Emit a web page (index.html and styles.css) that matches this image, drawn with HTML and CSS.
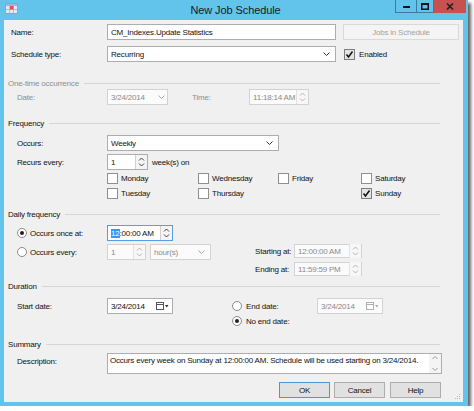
FILE: index.html
```html
<!DOCTYPE html>
<html>
<head>
<meta charset="utf-8">
<link rel="stylesheet" href="styles.css">
</head>
<body>
<div class="window">
  <div class="titlebar">
    <div class="tb-left">
      <svg class="app-icon" width="13" height="11" viewBox="0 0 13 11">
        <rect x="0.5" y="0.5" width="12" height="10" fill="#dfe9f7" stroke="#8aa6cf"/>
        <rect x="1" y="1" width="11" height="2" fill="#9bb6de"/>
        <line x1="4.5" y1="3" x2="4.5" y2="10" stroke="#a9bfe0"/>
        <line x1="8.5" y1="3" x2="8.5" y2="10" stroke="#a9bfe0"/>
        <line x1="1" y1="6.5" x2="12" y2="6.5" stroke="#a9bfe0"/>
        <rect x="5" y="3" width="3.5" height="3.5" fill="#e4563a"/>
      </svg>
    </div>
    <div class="title">New Job Schedule</div>
    <div class="tb-right">
      <div class="capbtns">
        <div class="capbtn min"><svg width="7" height="3" viewBox="0 0 7 3"><rect x="0" y="0" width="7" height="2" fill="#111"/></svg></div>
        <div class="capbtn max"><svg width="8" height="7" viewBox="0 0 8 7"><rect x="0.75" y="0.75" width="6.5" height="5.5" fill="none" stroke="#111" stroke-width="1.5"/><rect x="0" y="0" width="8" height="2" fill="#111"/></svg></div>
        <div class="capbtn close"><svg width="8" height="7" viewBox="0 0 8 7"><path d="M1 0.5 L7 6.5 M7 0.5 L1 6.5" stroke="#222" stroke-width="1.6"/></svg></div>
      </div>
    </div>
  </div>

  <div class="client">
    <div class="row top r-name">
      <span class="lbl lbl-top">Name:</span>
      <div class="input w-main">CM_Indexes.Update Statistics</div>
      <div class="btn btn-disabled jobs">Jobs in Schedule</div>
    </div>
    <div class="row top r-type">
      <span class="lbl lbl-top">Schedule type:</span>
      <div class="input select w-main"><span class="val">Recurring</span><svg class="chev" width="7" height="4" viewBox="0 0 7 4"><path d="M0.5 0.5 L3.5 3.5 L6.5 0.5" fill="none" stroke="#333"/></svg></div>
      <span class="cb checked enabled-cb"><svg width="9" height="9" viewBox="0 0 9 9"><path d="M1.5 4.5 L3.5 7 L7.5 1.5" fill="none" stroke="#111" stroke-width="1.5"/></svg></span>
      <span class="cb-text">Enabled</span>
    </div>

    <div class="group g-onetime">
      <span class="g-title muted">One-time occurrence</span><span class="g-line"></span>
    </div>
    <div class="row inner r-date">
      <span class="lbl lbl-in muted">Date:</span>
      <div class="input dis date w-date"><span class="val">3/24/2014</span><svg class="chev" width="7" height="4" viewBox="0 0 7 4"><path d="M0.5 0.5 L3.5 3.5 L6.5 0.5" fill="none" stroke="#aaa"/></svg></div>
      <span class="lbl lbl-time muted">Time:</span>
      <div class="input dis spin w-time60"><span class="val">11:18:14 AM</span>
        <span class="spinner dis-sp"><svg width="7" height="12" viewBox="0 0 7 12"><path d="M1 4.5 L3.5 2 L6 4.5 M1 7.5 L3.5 10 L6 7.5" fill="none" stroke="#b5b5b5"/></svg></span>
      </div>
    </div>

    <div class="group g-freq">
      <span class="g-title">Frequency</span><span class="g-line"></span>
    </div>
    <div class="row inner r-occurs">
      <span class="lbl lbl-in">Occurs:</span>
      <div class="input select w-occurs"><span class="val">Weekly</span><svg class="chev" width="7" height="4" viewBox="0 0 7 4"><path d="M0.5 0.5 L3.5 3.5 L6.5 0.5" fill="none" stroke="#333"/></svg></div>
    </div>
    <div class="row inner r-recurs">
      <span class="lbl lbl-in">Recurs every:</span>
      <div class="input spin w-recurs"><span class="val">1</span>
        <span class="spinner"><svg width="7" height="12" viewBox="0 0 7 12"><path d="M1 4.5 L3.5 2 L6 4.5 M1 7.5 L3.5 10 L6 7.5" fill="none" stroke="#444"/></svg></span>
      </div>
      <span class="after">week(s) on</span>
    </div>
    <div class="days d1">
      <span class="day c1"><span class="cb"></span><span class="cb-text">Monday</span></span>
      <span class="day c2"><span class="cb"></span><span class="cb-text">Wednesday</span></span>
      <span class="day c3"><span class="cb"></span><span class="cb-text">Friday</span></span>
      <span class="day c4"><span class="cb"></span><span class="cb-text">Saturday</span></span>
    </div>
    <div class="days d2">
      <span class="day c1"><span class="cb"></span><span class="cb-text">Tuesday</span></span>
      <span class="day c2"><span class="cb"></span><span class="cb-text">Thursday</span></span>
      <span class="day c3"></span>
      <span class="day c4"><span class="cb checked"><svg width="9" height="9" viewBox="0 0 9 9"><path d="M1.5 4.5 L3.5 7 L7.5 1.5" fill="none" stroke="#111" stroke-width="1.5"/></svg></span><span class="cb-text">Sunday</span></span>
    </div>

    <div class="group g-daily">
      <span class="g-title">Daily frequency</span><span class="g-line"></span>
    </div>
    <div class="row inner r-once">
      <span class="lbl lbl-radio"><span class="radio on"></span><span class="rb-text">Occurs once at:</span></span>
      <div class="input spin w-once focus"><span class="val"><span class="sel">12</span>:00:00 AM</span>
        <span class="spinner"><svg width="7" height="12" viewBox="0 0 7 12"><path d="M1 4.5 L3.5 2 L6 4.5 M1 7.5 L3.5 10 L6 7.5" fill="none" stroke="#444"/></svg></span>
      </div>
    </div>
    <div class="r-every">
      <div class="row inner every-left">
        <span class="lbl lbl-radio"><span class="radio"></span><span class="rb-text">Occurs every:</span></span>
        <div class="input dis spin w-every"><span class="val">1</span>
          <span class="spinner dis-sp"><svg width="7" height="12" viewBox="0 0 7 12"><path d="M1 4.5 L3.5 2 L6 4.5 M1 7.5 L3.5 10 L6 7.5" fill="none" stroke="#b5b5b5"/></svg></span>
        </div>
        <div class="input dis select w-hours"><span class="val">hour(s)</span><svg class="chev" width="7" height="4" viewBox="0 0 7 4"><path d="M0.5 0.5 L3.5 3.5 L6.5 0.5" fill="none" stroke="#aaa"/></svg></div>
      </div>
      <div class="every-right">
        <div class="row small">
          <span class="lbl lbl-se">Starting at:</span>
          <div class="input dis spin w-se"><span class="val">12:00:00 AM</span>
            <span class="spinner dis-sp"><svg width="7" height="12" viewBox="0 0 7 12"><path d="M1 4.5 L3.5 2 L6 4.5 M1 7.5 L3.5 10 L6 7.5" fill="none" stroke="#b5b5b5"/></svg></span>
          </div>
        </div>
        <div class="row small r-ending">
          <span class="lbl lbl-se">Ending at:</span>
          <div class="input dis spin w-se"><span class="val">11:59:59 PM</span>
            <span class="spinner dis-sp"><svg width="7" height="12" viewBox="0 0 7 12"><path d="M1 4.5 L3.5 2 L6 4.5 M1 7.5 L3.5 10 L6 7.5" fill="none" stroke="#b5b5b5"/></svg></span>
          </div>
        </div>
      </div>
    </div>

    <div class="group g-duration">
      <span class="g-title">Duration</span><span class="g-line"></span>
    </div>
    <div class="row inner r-start">
      <span class="lbl lbl-in">Start date:</span>
      <div class="input date w-date66"><span class="val">3/24/2014</span>
        <span class="cal"><svg width="13" height="8" viewBox="0 0 13 8"><rect x="0.5" y="0.5" width="7" height="7" fill="#fff" stroke="#555"/><line x1="0.5" y1="2.5" x2="7.5" y2="2.5" stroke="#555"/><path d="M9 3 L12.5 3 L10.75 5.5 Z" fill="#333"/></svg></span>
      </div>
      <span class="rb-end"><span class="radio"></span><span class="rb-text end-text">End date:</span></span>
      <div class="input dis date w-date66"><span class="val">3/24/2014</span>
        <span class="cal"><svg width="13" height="8" viewBox="0 0 13 8"><rect x="0.5" y="0.5" width="7" height="7" fill="#fff" stroke="#b0b0b0"/><line x1="0.5" y1="2.5" x2="7.5" y2="2.5" stroke="#b0b0b0"/><path d="M9 3 L12.5 3 L10.75 5.5 Z" fill="#aaa"/></svg></span>
      </div>
    </div>
    <div class="row small r-noend">
      <span class="radio on"></span><span class="rb-text">No end date:</span>
    </div>

    <div class="group g-summary">
      <span class="g-title">Summary</span><span class="g-line"></span>
    </div>
    <div class="row inner r-desc">
      <span class="lbl lbl-in">Description:</span>
      <div class="textbox">
        <span class="tb-text">Occurs every week on Sunday at 12:00:00 AM. Schedule will be used starting on 3/24/2014.</span>
        <span class="vscroll"><svg width="8" height="19" viewBox="0 0 8 19"><path d="M1.5 5 L4 2.5 L6.5 5 M1.5 14 L4 16.5 L6.5 14" fill="none" stroke="#999"/></svg></span>
      </div>
    </div>

    <div class="buttons">
      <div class="btn default">OK</div>
      <div class="btn">Cancel</div>
      <div class="btn help">Help</div>
    </div>
    <svg class="grip" width="6" height="6" viewBox="0 0 6 6"><rect x="4" y="0" width="1" height="1" fill="#bbb"/><rect x="2" y="2" width="1" height="1" fill="#bbb"/><rect x="4" y="2" width="1" height="1" fill="#bbb"/><rect x="0" y="4" width="1" height="1" fill="#bbb"/><rect x="2" y="4" width="1" height="1" fill="#bbb"/><rect x="4" y="4" width="1" height="1" fill="#bbb"/></svg>
  </div>
</div>
</body>
</html>
```

FILE: styles.css
```css
* { box-sizing: border-box; }
body {
  margin: 0;
  background: #ffffff;
  font-family: "Liberation Sans", Arial, sans-serif;
  font-size: 8px;
  letter-spacing: -0.2px;
  color: #111;
}
.window {
  width: 468px;
  height: 406px;
  background: #62c4ea;
  padding: 0 5px 4px 4px;
  display: flex;
  flex-direction: column;
  box-shadow: 3px 3px 3px rgba(0, 0, 0, 0.6);
}
.titlebar {
  height: 20px;
  display: grid;
  grid-template-columns: 1fr auto 1fr;
  align-items: start;
}
.tb-left { padding: 3px 0 0 1px; }
.app-icon { display: block; }
.title {
  font-size: 11px;
  letter-spacing: -0.1px;
  color: #1a1a1a;
  padding-top: 4px;
  padding-left: 4px;
}
.tb-right { display: flex; justify-content: flex-end; margin-right: -3px; }
.capbtns { display: flex; height: 13px; }
.capbtn {
  display: flex;
  align-items: center;
  justify-content: center;
  height: 13px;
}
.capbtn.min { width: 21px; border: 1px solid #3d7d98; border-top: 0; border-right: 0; padding-top: 3px; }
.capbtn.max { width: 18px; border: 1px solid #3d7d98; border-top: 0; }
.capbtn.close { width: 32px; background: #c75050; }

.client {
  flex: 1;
  background: #f0f0f0;
  padding-left: 4px;
  position: relative;
}
.row { display: flex; align-items: center; height: 16px; }
.row.small { height: 14px; }
.row.top { padding-left: 3px; }
.row.inner { padding-left: 9px; }
.lbl { flex: none; white-space: nowrap; }
.lbl-top { width: 96px; }
.lbl-in { width: 90px; }
.lbl-radio { width: 90px; display: flex; align-items: center; }
.muted { color: #8e8e8e; }

.r-name { margin-top: 4px; }
.r-type { margin-top: 6px; }

.input {
  height: 16px;
  border: 1px solid #abadb3;
  background: #fff;
  display: flex;
  align-items: center;
  padding: 0 2px 0 3px;
  white-space: nowrap;
  flex: none;
}
.input .val { flex: 1; }
.input.dis { border-color: #d2d2d2; background: #fbfbfb; color: #8a8a8a; }
.select .chev { margin-right: 3px; }
.spin { padding-right: 0; }
.spinner {
  width: 12px;
  height: 14px;
  border-left: 1px solid #d0d0d0;
  display: flex;
  align-items: center;
  justify-content: center;
  background: #f4f4f4;
}
.spinner.dis-sp { border-left-color: #e2e2e2; background: #f7f7f7; }
.cal { display: flex; align-items: center; margin-right: 1px; }

.w-main { width: 229px; }
.w-date { width: 61px; }
.w-time60 { width: 60px; }
.w-occurs { width: 172px; }
.w-recurs { width: 41px; }
.w-once { width: 66px; }
.w-every { width: 39px; }
.w-hours { width: 61px; margin-left: 4px; }
.w-se { width: 68px; height: 14px; }
.w-date66 { width: 66px; }

.btn {
  height: 16px;
  width: 51px;
  border: 1px solid #adadad;
  background: #e1e1e1;
  display: flex;
  align-items: center;
  justify-content: center;
  white-space: nowrap;
}
.btn.default { border-color: #4f95d3; }
.btn-disabled { background: #f4f4f4; border-color: #d9d9d9; color: #a3a3a3; }
.jobs { width: 116px; margin-left: 7px; }

.cb {
  width: 11px;
  height: 11px;
  border: 1px solid #8f8f8f;
  background: #fff;
  display: inline-flex;
  align-items: center;
  justify-content: center;
  flex: none;
}
.cb.checked { background: #e4e4e4; border-color: #7c7c7c; }
.enabled-cb { margin-left: 8px; }
.cb-text { margin-left: 4px; }
.day { display: flex; align-items: center; flex: none; }
.c1 { width: 91px; }
.c2 { width: 80px; }
.c3 { width: 83px; }
.days { display: flex; align-items: center; height: 12px; padding-left: 99px; }
.days .cb-text { margin-left: 3px; }
.d1 { margin-top: 2px; }
.d2 { margin-top: 3px; }

.radio {
  width: 10px;
  height: 10px;
  border: 1px solid #8a8a8a;
  border-radius: 50%;
  background: #fff;
  display: inline-flex;
  align-items: center;
  justify-content: center;
  flex: none;
}
.radio.on::after {
  content: "";
  width: 4px;
  height: 4px;
  border-radius: 50%;
  background: #222;
}
.rb-text { margin-left: 3px; white-space: nowrap; }

.group {
  display: flex;
  align-items: center;
  height: 12px;
  width: 432px;
}
.g-line { flex: 1; height: 1px; background: #d5d5d5; margin-left: 5px; }
.g-onetime { margin-top: 15px; }
.g-freq { margin-top: 12px; }
.g-daily { margin-top: 9px; }
.g-duration { margin-top: 4px; }
.g-summary { margin-top: 10px; }

.lbl-time { width: 57px; margin-left: 24px; }
.r-occurs { margin-top: 6px; }
.r-recurs { margin-top: 3px; }
.after { margin-left: 4px; }
.r-once { margin-top: 5px; }
.w-once .sel { background: #3399ff; color: #fff; }
.w-once.focus { border-color: #569de5; }

.r-every { display: flex; margin-top: 3px; align-items: flex-start; }
.every-right { margin-left: 44px; }
.lbl-se { width: 39px; }
.r-ending { margin-top: 4px; }

.r-start { margin-top: 6px; }
.rb-end { display: flex; align-items: center; width: 85px; margin-left: 59px; flex: none; }
.end-text { margin-left: 4px; }
.r-noend { padding-left: 224px; }
.r-noend .rb-text { margin-left: 4px; }

.r-desc { margin-top: 3px; height: 21px; align-items: flex-start; }
.r-desc .lbl { padding-top: 4px; }
.textbox {
  width: 335px;
  height: 21px;
  border: 1px solid #abadb3;
  background: #fff;
  display: flex;
  justify-content: space-between;
}
.tb-text { padding: 2px 0 0 2px; white-space: nowrap; }
.vscroll { width: 12px; display: flex; justify-content: center; background: #f4f4f4; }

.buttons {
  display: flex;
  justify-content: flex-end;
  margin-top: 8px;
  padding-right: 22px;
  gap: 4px;
}
.help { margin-left: 1px; }
.grip { position: absolute; right: 2px; bottom: 2px; }
```
